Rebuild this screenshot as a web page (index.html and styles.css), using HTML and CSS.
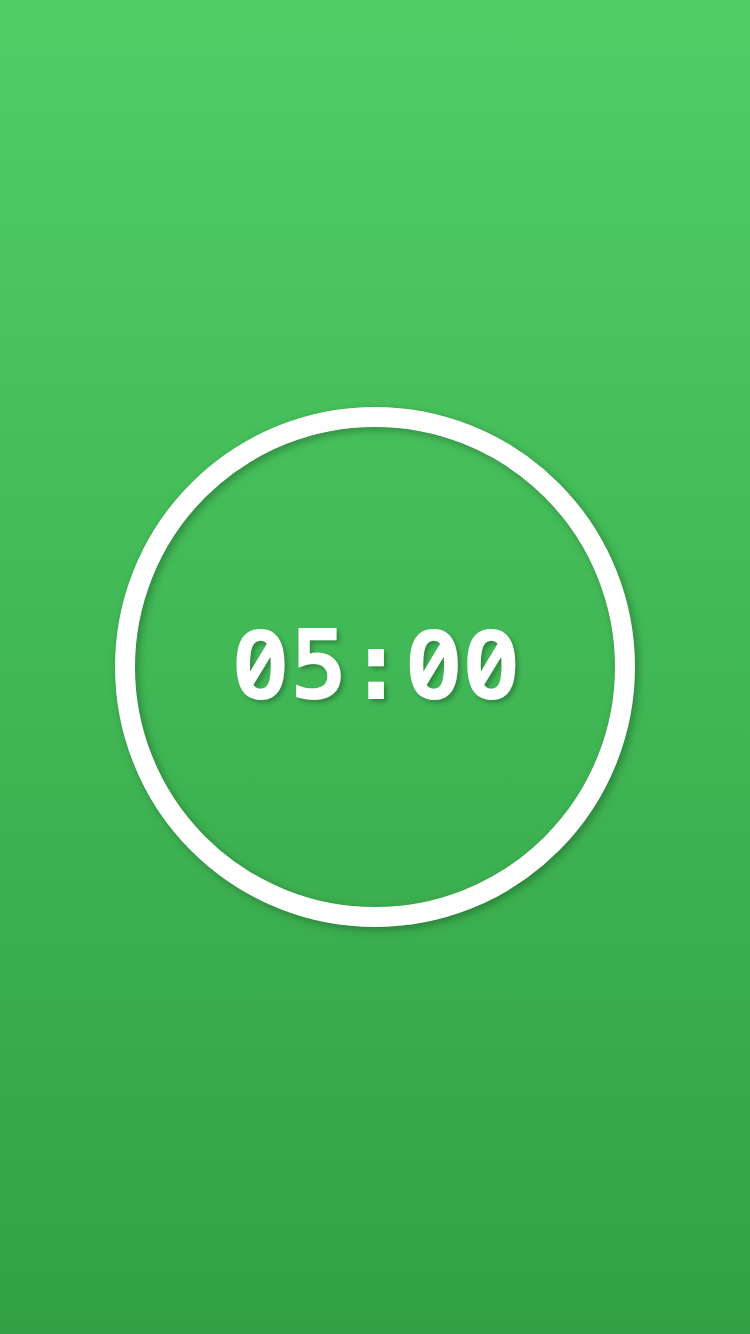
FILE: index.html
```html
<!DOCTYPE html>
<html>
<head>
<meta charset="utf-8">
<link rel="stylesheet" href="styles.css">
</head>
<body>
<main class="screen">
  <div class="ring-wrap">
    <div class="ring"></div>
    <div class="time"><span class="zero">0</span>5:<span class="zero">0</span><span class="zero">0</span></div>
  </div>
</main>
</body>
</html>
```
FILE: styles.css
```css
html, body {
  margin: 0;
  padding: 0;
}
.screen {
  width: 750px;
  height: 1334px;
  background: linear-gradient(to bottom, #50ce66 0%, #32a145 100%);
  display: flex;
  align-items: center;
  justify-content: center;
}
.ring-wrap {
  position: relative;
  width: 520px;
  height: 520px;
  display: flex;
  align-items: center;
  justify-content: center;
}
.ring {
  position: absolute;
  inset: 0;
  box-sizing: border-box;
  border: 20px solid #fff;
  border-radius: 50%;
  filter: drop-shadow(3px 3px 4px rgba(0, 0, 0, 0.28));
}
.time {
  position: relative;
  font-family: "DejaVu Sans Mono", monospace;
  font-weight: bold;
  font-size: 96px;
  line-height: 1;
  height: 96px;
  margin-bottom: 10px;
  margin-left: 2px;
  color: #fff;
  white-space: nowrap;
  text-shadow: 3px 3px 4px rgba(0, 0, 0, 0.25);
}
.zero {
  font-family: "Noto Sans Mono", "DejaVu Sans Mono", monospace;
}
```
